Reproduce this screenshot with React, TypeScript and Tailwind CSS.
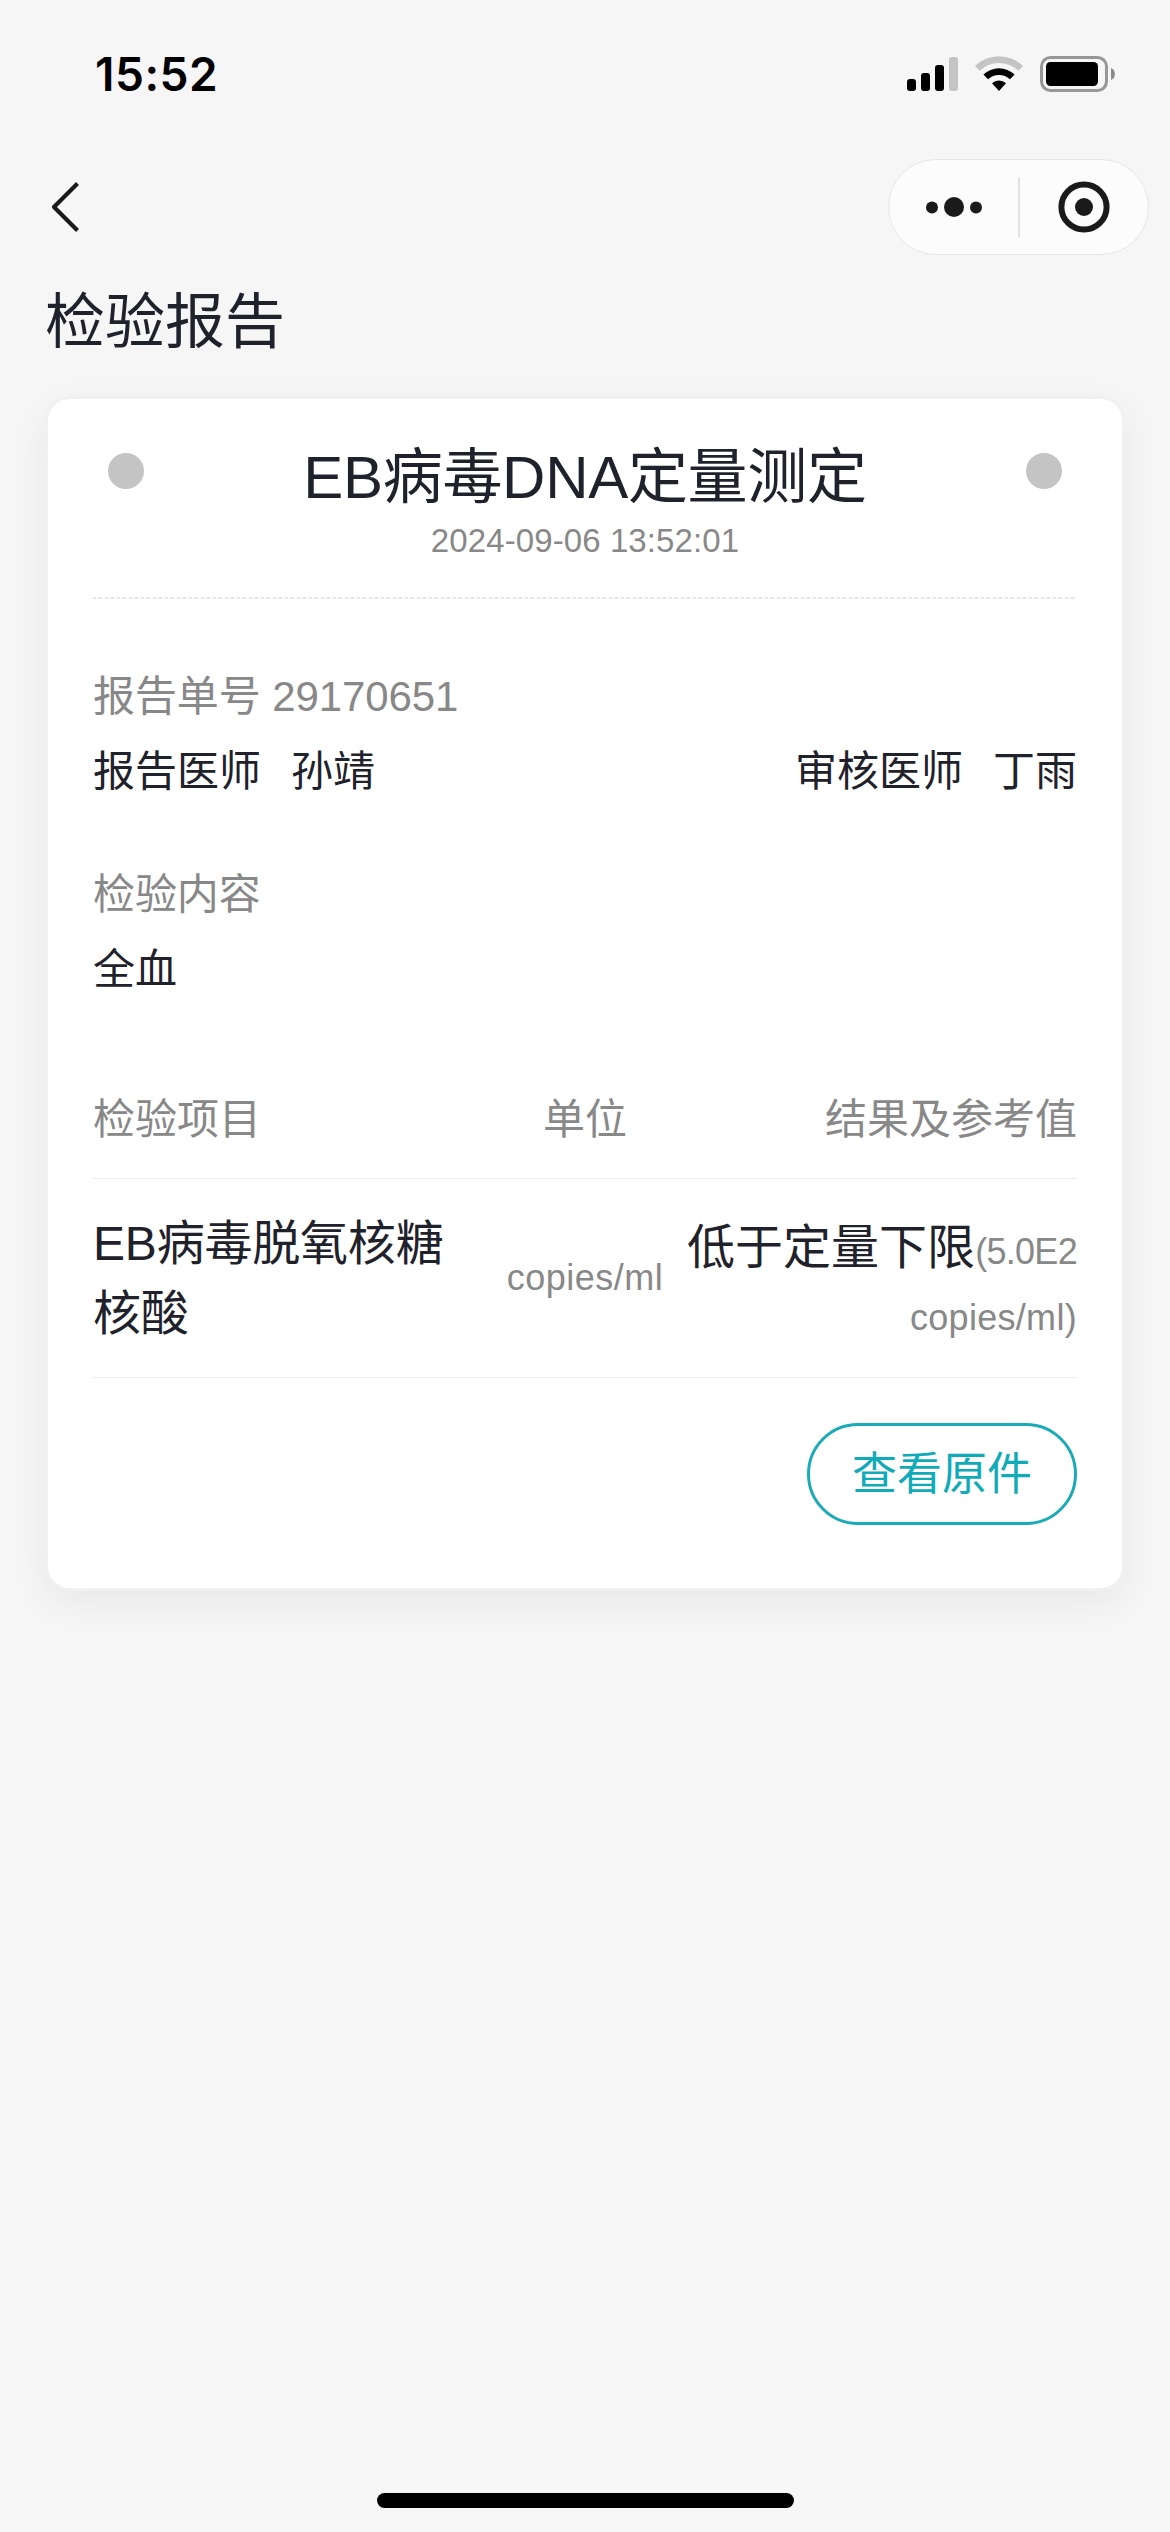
import type { ReactNode } from "react";

const REPORT = {
  title: "EB病毒DNA定量测定",
  time: "2024-09-06 13:52:01",
  no: "29170651",
  doctor: "孙靖",
  reviewer: "丁雨",
  specimen: "全血",
};

const ITEMS = [
  {
    name: "EB病毒脱氧核糖核酸",
    unit: "copies/ml",
    result: "低于定量下限",
    limit: "(5.0E2",
    limitUnit: "copies/ml)",
  },
];

export default function App() {
  return (
    <div className="flex h-[2532px] w-[1170px] flex-col bg-[#f6f6f6] font-['Liberation_Sans','Noto_Sans_CJK_SC',sans-serif] text-[#1f222b]">
      <StatusBar />
      <NavBar />
      <h1 className="mt-[26px] pl-[45px] text-[60px] leading-[84px]">检验报告</h1>
      <ReportCard />
      <div className="mx-auto mt-auto mb-6 h-[15px] w-[417px] rounded-full bg-black" />
    </div>
  );
}

function StatusBar() {
  return (
    <div className="flex h-[141px] items-start justify-between pr-[54px] pl-[95px]">
      <span className="mt-[44px] font-[Inter] text-[46px] leading-[60px] font-semibold tracking-[0.5px] text-black">
        15:52
      </span>
      <div className="mt-[55px] flex">
        <svg width="51" height="38" viewBox="0 0 51 38">
          <rect x="0" y="24" width="9" height="12" rx="3" />
          <rect x="14" y="18" width="9" height="18" rx="3" />
          <rect x="28" y="10" width="9" height="26" rx="3" />
          <rect x="42" y="2" width="9" height="34" rx="3" fill="#c4c4c4" />
        </svg>
        <svg className="ml-[17px]" width="48" height="38" viewBox="0 0 48 38">
          <path d="M0 11a34.5 34.5 0 0 1 48 0l-4.6 4.7a28 28 0 0 0-38.8 0z" fill="#c4c4c4" />
          <path d="M8.4 19.6a22.5 22.5 0 0 1 31.2 0L35 24.3a16 16 0 0 0-22 0z" />
          <path d="M17 28.3a10.4 10.4 0 0 1 14 0L24 36z" />
        </svg>
        <svg className="ml-[17px]" width="76" height="38" viewBox="0 0 76 38">
          <rect x="1.5" y="2.5" width="65" height="33" rx="9" fill="none" stroke="#979797" strokeWidth="3" />
          <rect x="6" y="7" width="52" height="24" rx="4.5" />
          <path d="M71 13c5.2 1.5 5.2 10.5 0 12z" fill="#8a8a8a" />
        </svg>
      </div>
    </div>
  );
}

function NavBar() {
  return (
    <div className="flex h-[114px] items-end justify-between pr-[21px] pl-[50px]">
      <svg className="mb-[22px]" width="32" height="52" viewBox="0 0 32 52" fill="none" stroke="#1a1a1a" strokeWidth="4.2">
        <path d="M27.5 2.5 4 26l23.5 23.5" strokeLinejoin="round" />
      </svg>
      <div className="flex h-24 w-[261px] items-center rounded-full border border-[#e6e6e6] bg-[#fcfcfc]">
        <svg className="ml-[36px]" width="58" height="22" viewBox="0 0 58 22" fill="#1a1a1a">
          <circle cx="7" cy="11.5" r="6" />
          <circle cx="29" cy="11" r="10" />
          <circle cx="51" cy="11.5" r="6" />
        </svg>
        <div className="ml-[35px] h-[60px] w-[2px] bg-[#e2e2e2]" />
        <svg className="ml-[38px]" width="52" height="52" viewBox="0 0 52 52">
          <circle cx="26" cy="26" r="22.6" fill="none" stroke="#1a1a1a" strokeWidth="6" />
          <circle cx="26" cy="26" r="9" fill="#1a1a1a" />
        </svg>
      </div>
    </div>
  );
}

function ReportCard() {
  return (
    <section className="mx-[45px] mt-[31px] h-[1195px] rounded-[24px] border-[3px] border-[#f1f1f1] bg-white bg-clip-padding px-[45px] shadow-[0_12px_36px_rgba(0,0,0,0.06)]">
      <header className="flex items-start justify-between px-[15px] pt-[37px]">
        <Dot />
        <div className="text-center">
          <h2 className="text-[60px] leading-[84px] tracking-[-0.3px]">{REPORT.title}</h2>
          <p className="text-[33px] leading-[42px] tracking-[0.1px] text-[#888]">{REPORT.time}</p>
        </div>
        <Dot />
      </header>

      <div className="mt-[35px] h-[2px] bg-[repeating-linear-gradient(90deg,#e6e6e6_0px,#e6e6e6_3px,#f8f8f8_3px,#f8f8f8_6px)]" />

      <div className="mt-[60px] text-[42px] leading-[75px]">
        <Label>报告单号 {REPORT.no}</Label>
        <div className="flex justify-between">
          <Doctor title="报告医师" name={REPORT.doctor} />
          <Doctor title="审核医师" name={REPORT.reviewer} />
        </div>
      </div>

      <div className="mt-[48px] text-[42px] leading-[75px]">
        <Label>检验内容</Label>
        <p>{REPORT.specimen}</p>
      </div>

      {/* Result table */}
      <div className="mt-[62px] grid h-[110px] grid-cols-3 items-start border-b border-[#ececec] pt-[21px] text-[42px] leading-[60px] text-[#888]">
        <span>检验项目</span>
        <span className="text-center">单位</span>
        <span className="text-right">结果及参考值</span>
      </div>
      {ITEMS.map((item) => (
        <div key={item.name} className="flex h-[199px] items-center border-b border-[#ececec]">
          <span className="w-[394px] pt-px pr-[30px] text-[48px] leading-[70px] tracking-[-0.2px]">{item.name}</span>
          <span className="w-[196px] text-center text-[36px] leading-[60px] tracking-[0.5px] text-[#888]">{item.unit}</span>
          <div className="flex w-[394px] flex-col items-end pt-[13px]">
            <div className="flex items-baseline text-[48px] leading-[66px]">
              <span>{item.result}</span>
              <span className="text-[36px] leading-none tracking-[-0.7px] text-[#888]">{item.limit}</span>
            </div>
            <span className="text-[36px] leading-[74px] tracking-[0.3px] text-[#888]">{item.limitUnit}</span>
          </div>
        </div>
      ))}

      <div className="mt-[45px] flex justify-end">
        <button className="h-[102px] w-[270px] rounded-full border-[3px] border-[#19abb7] pt-px text-[45px] leading-[60px] text-[#10abb8]">
          查看原件
        </button>
      </div>
    </section>
  );
}

function Dot() {
  return <span className="mt-[17px] size-9 rounded-full bg-[#c4c4c4]" />;
}

function Label({ children }: { children: ReactNode }) {
  return <p className="tracking-[-0.1px] text-[#888]">{children}</p>;
}

function Doctor({ title, name }: { title: string; name: string }) {
  return (
    <p className="flex gap-[30px]">
      <span>{title}</span>
      <span>{name}</span>
    </p>
  );
}
